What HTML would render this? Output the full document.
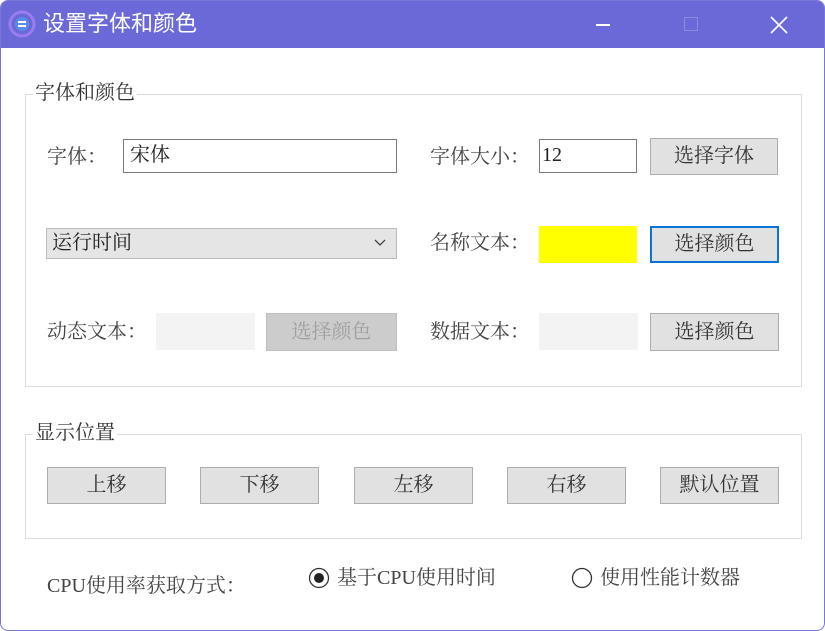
<!DOCTYPE html>
<html><head><meta charset="utf-8"><style>
*{box-sizing:border-box;margin:0;padding:0}
html,body{width:825px;height:631px;overflow:hidden;background:#fff}
body{font-family:"Liberation Serif","Noto Serif CJK SC","Noto Sans CJK SC",serif;font-size:20px;color:#222;position:relative}
.a{position:absolute}
.win{left:0;top:0;width:825px;height:631px;border:1px solid #7a76d8;border-radius:8px;overflow:hidden;background:#fff}
.in{left:-1px;top:-1px;width:825px;height:631px}
.title{left:0;top:0;width:825px;height:48px;background:#6b69d7;color:#fff;font-family:"Liberation Sans","Noto Sans CJK SC",sans-serif;font-size:22px}
.grp{border:1px solid #dcdcdc}
.lbl{background:#fff;padding:0 2px;color:#333;line-height:22px}
.t{line-height:22px;color:#444;white-space:nowrap}
.inp{border:1px solid #7a7a7a;background:#fff;padding-left:6px;line-height:30px}
.btn{background:#e1e1e1;border:1px solid #adadad;text-align:center;color:#333}
.box{background:#f3f3f3}
</style></head><body>
<div class="a win"><div class="a in">
<div class="a title">
<svg class="a" style="left:8px;top:10px" width="28" height="28" viewBox="0 0 28 28"><circle cx="14" cy="14" r="12" fill="none" stroke="#9a7cf0" stroke-width="3"/><circle cx="14" cy="14" r="7" fill="#5b8ce8"/><path d="M10 12h8M10 16h8" stroke="#fff" stroke-width="2"/></svg>
<div class="a" style="left:43px;top:9px;line-height:30px">设置字体和颜色</div>
<div class="a" style="left:596px;top:24px;width:14px;height:1.5px;background:#fff"></div>
<div class="a" style="left:684px;top:17px;width:14px;height:14px;border:1px solid #8a88e0"></div>
<svg class="a" style="left:770px;top:16px" width="18" height="18"><path d="M1 1L17 17M17 1L1 17" stroke="#fff" stroke-width="1.6"/></svg>
</div>

<div class="a grp" style="left:25px;top:94px;width:777px;height:293px"></div>
<div class="a lbl" style="left:33px;top:82px">字体和颜色</div>
<div class="a t" style="left:47px;top:146px">字体：</div>
<div class="a inp" style="left:123px;top:139px;width:274px;height:34px">宋体</div>
<div class="a t" style="left:430px;top:146px">字体大小：</div>
<div class="a inp" style="left:539px;top:139px;width:98px;height:34px;padding-left:2px">12</div>
<div class="a btn" style="left:650px;top:138px;width:128px;height:37px;line-height:35px">选择字体</div>

<div class="a" style="left:46px;top:228px;width:351px;height:31px;background:#e5e5e5;border:1px solid #bcbcbc;padding-left:5px;line-height:29px">运行时间
<svg class="a" style="left:327px;top:10px" width="12" height="8"><path d="M1 1L6 6L11 1" fill="none" stroke="#444" stroke-width="1.3"/></svg></div>
<div class="a t" style="left:430px;top:232px">名称文本：</div>
<div class="a" style="left:539px;top:226px;width:98px;height:37px;background:#ffff00"></div>
<div class="a btn" style="left:650px;top:226px;width:129px;height:37px;line-height:33px;border:2px solid #0a74d4">选择颜色</div>

<div class="a t" style="left:47px;top:321px">动态文本：</div>
<div class="a box" style="left:156px;top:313px;width:99px;height:37px"></div>
<div class="a btn" style="left:266px;top:313px;width:131px;height:38px;line-height:36px;background:#cccccc;border-color:#bfbfbf;color:#a0a0a0">选择颜色</div>
<div class="a t" style="left:430px;top:321px">数据文本：</div>
<div class="a box" style="left:539px;top:313px;width:99px;height:37px"></div>
<div class="a btn" style="left:650px;top:313px;width:129px;height:38px;line-height:36px">选择颜色</div>

<div class="a grp" style="left:25px;top:434px;width:777px;height:105px"></div>
<div class="a lbl" style="left:33px;top:422px">显示位置</div>
<div class="a btn" style="left:47px;top:467px;width:119px;height:37px;line-height:35px">上移</div>
<div class="a btn" style="left:200px;top:467px;width:119px;height:37px;line-height:35px">下移</div>
<div class="a btn" style="left:354px;top:467px;width:119px;height:37px;line-height:35px">左移</div>
<div class="a btn" style="left:507px;top:467px;width:119px;height:37px;line-height:35px">右移</div>
<div class="a btn" style="left:660px;top:467px;width:119px;height:37px;line-height:35px">默认位置</div>

<div class="a t" style="left:47px;top:575px">CPU使用率获取方式：</div>
<svg class="a" style="left:308px;top:567px" width="22" height="22"><circle cx="11" cy="11" r="9.5" fill="#fff" stroke="#333" stroke-width="1.3"/><circle cx="11" cy="11" r="5" fill="#222"/></svg>
<div class="a t" style="left:337px;top:567px">基于CPU使用时间</div>
<svg class="a" style="left:571px;top:567px" width="22" height="22"><circle cx="11" cy="11" r="9.5" fill="#fff" stroke="#333" stroke-width="1.3"/></svg>
<div class="a t" style="left:600px;top:567px">使用性能计数器</div>
</div></div>
</body></html>
